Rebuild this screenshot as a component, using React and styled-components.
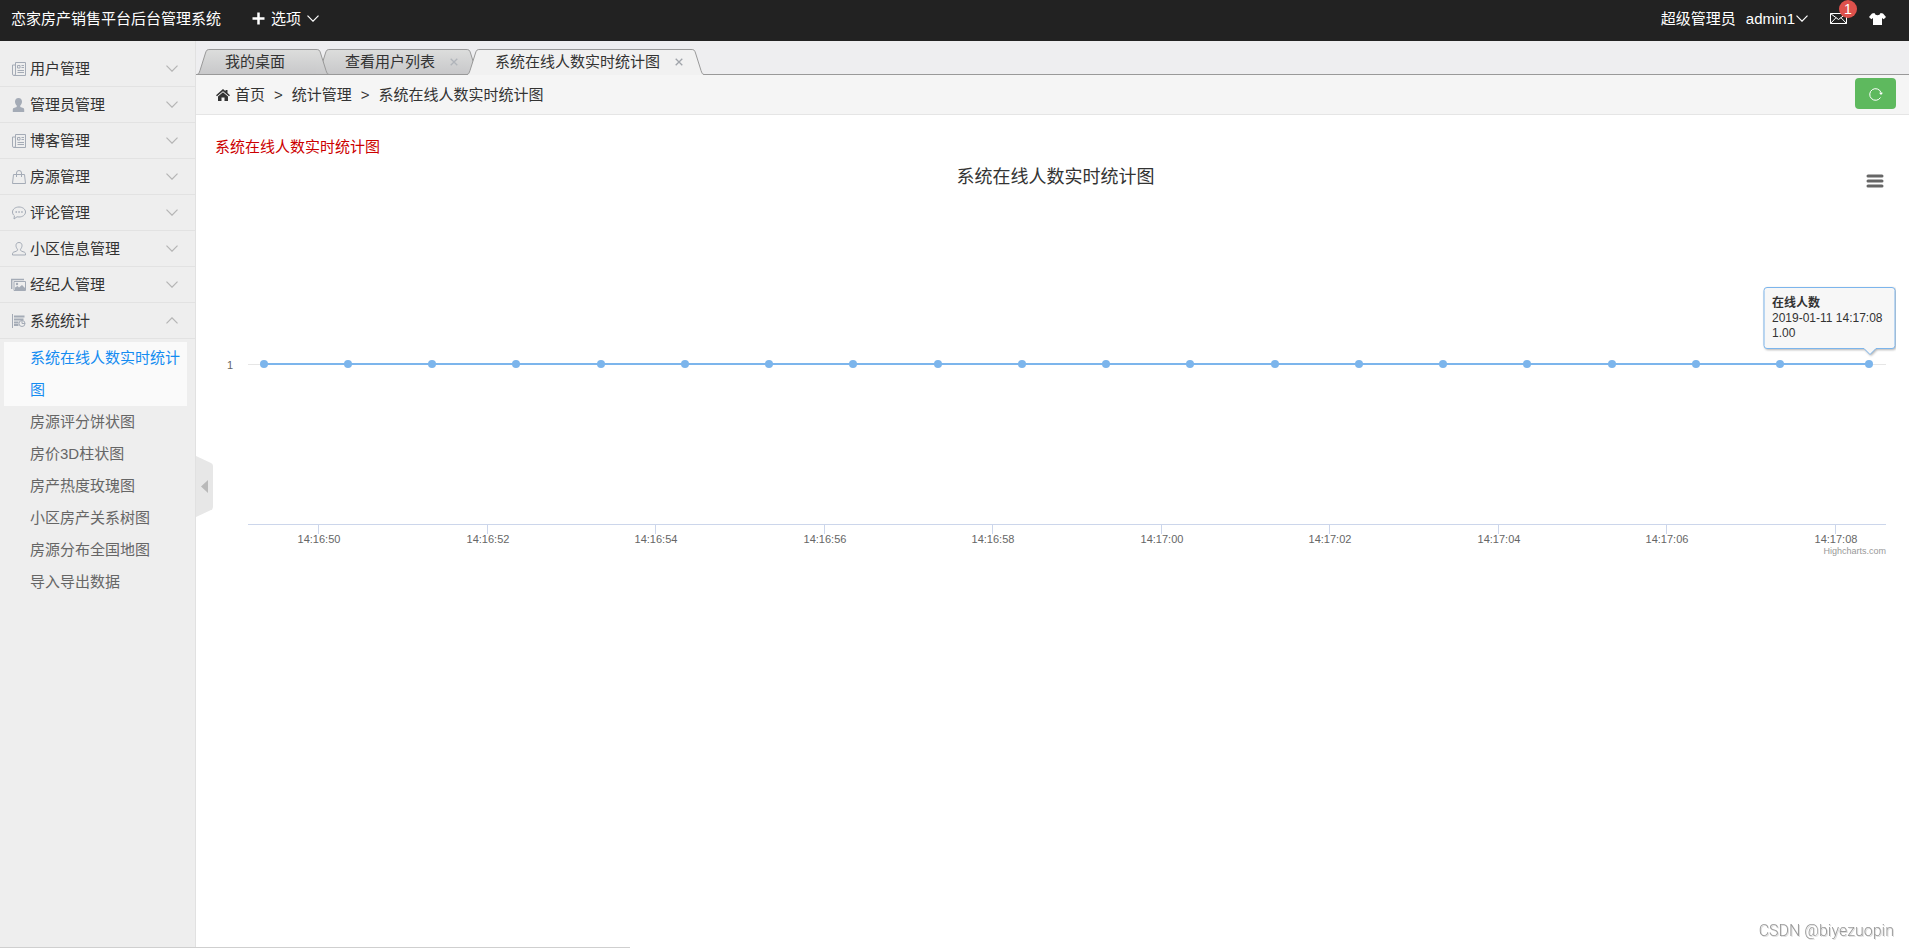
import React, { useCallback, useEffect, useRef, useState } from 'react';
import styled, { createGlobalStyle } from 'styled-components';

const MENUS = [
    { icon: 'news', title: '用户管理', items: [] },
    { icon: 'user', title: '管理员管理', items: [] },
    { icon: 'news', title: '博客管理', items: [] },
    { icon: 'bag', title: '房源管理', items: [] },
    { icon: 'comment', title: '评论管理', items: [] },
    { icon: 'userLine', title: '小区信息管理', items: [] },
    { icon: 'photo', title: '经纪人管理', items: [] },
    {
        icon: 'stats',
        title: '系统统计',
        items: [
            '系统在线人数实时统计图',
            '房源评分饼状图',
            '房价3D柱状图',
            '房产热度玫瑰图',
            '小区房产关系树图',
            '房源分布全国地图',
            '导入导出数据',
        ],
    },
];

const TABS = [
    { title: '我的桌面', closable: false },
    { title: '查看用户列表', closable: true },
    { title: '系统在线人数实时统计图', closable: true },
];

// seconds counted from 14:16:50
const TICKS = [
    { at: 0, label: '14:16:50' },
    { at: 2, label: '14:16:52' },
    { at: 4, label: '14:16:54' },
    { at: 6, label: '14:16:56' },
    { at: 8, label: '14:16:58' },
    { at: 10, label: '14:17:00' },
    { at: 12, label: '14:17:02' },
    { at: 14, label: '14:17:04' },
    { at: 16, label: '14:17:06' },
    { at: 18, label: '14:17:08' },
];
const POINTS = [...Array.from({ length: 19 }, (_, i) => i - 0.65), 18.4];
const RANGE = [-0.84, 18.6];

const MenuIcon = ({ name }) => (
    <svg width="15" height="14" viewBox="0 0 15 14" fill="none" stroke="#a4abb6" aria-hidden="true">
        {name === 'news' && (
            <>
                <path d="M4.500.5h10v13H3a1.500 1.500 0 0 1-1.500-1.500V3h3M4.500.5V12a1.500 1.500 0 0 1-1.500 1.500" />
                <path d="M6.500 3.500h2.500v2.500H6.500zM10.500 3.500h2.500M10.500 5.500h2.500M6.500 8.500h6.500M6.500 10.500h6.500" />
            </>
        )}
        {name === 'user' && (
            <path d="M7.500 0C5.300 0 4 1.500 4 3.600c0 1.600.7 3 1.700 3.900v1.400L2.800 10c-.8.300-1 1-1 2v2h11.400v-2c0-1-.2-1.700-1-2L9.300 8.900V7.500c1-.9 1.700-2.300 1.700-3.900C11 1.500 9.700 0 7.500 0z" fill="#a4abb6" stroke="none" />
        )}
        {name === 'bag' && (
            <path d="M2.500 4.500h11l1 9h-13zM5.500 7V3a2.500 2.500 0 0 1 5 0v4" />
        )}
        {name === 'comment' && (
            <>
                <path d="M8 1c3.700 0 6.500 2.200 6.500 5S11.700 11 8 11c-.7 0-1.400-.1-2-.2L3 13l.4-3.200C2.200 8.900 1.500 7.500 1.500 6c0-2.800 2.800-5 6.500-5z" />
                <path d="M4.500 6H6M7.300 6h1.500M10.200 6h1.500" strokeWidth="1.500" />
            </>
        )}
        {name === 'userLine' && (
            <path d="M8 .5C6.100.5 5 1.700 5 3.500c0 1.600.8 3 1.500 3.700 0 1-.3 1.800-1.300 2.100L2.500 10.200c-.8.300-1 1-1 2.800h13c0-1.800-.2-2.500-1-2.800l-2.700-.9c-1-.3-1.300-1.100-1.300-2.100C10.200 6.500 11 5.100 11 3.500c0-1.800-1.100-3-3-3z" />
        )}
        {name === 'photo' && (
            <>
                <path d="M.7 11V1.500h12.300" strokeWidth="1.400" />
                <path d="M3 3.500h11.500v9H3z" />
                <path d="M4 12V9.500l2.500-1.500 1.500 1.500 3-2.500 3 3v2z" fill="#a4abb6" stroke="none" />
                <circle cx="6" cy="6" r="1.200" fill="#a4abb6" stroke="none" />
            </>
        )}
        {name === 'stats' && (
            <>
                <path d="M1.500 0v14" />
                <path d="M3 2.500h10.500M3 5.500h9.500M3 8.500h4.500M3 11h4.500" strokeWidth="1.800" />
                <circle cx="11" cy="9.500" r="3" />
                <path d="M11 6.500v3h3" />
            </>
        )}
    </svg>
);

const Chevron = ({ up, color }) => (
    <svg width="12" height="7" viewBox="0 0 12 7" fill="none" stroke={color} strokeWidth="1.200" aria-hidden="true">
        <path d={up ? 'M.5 6.300L6 .8l5.500 5.500' : 'M.5.7L6 6.200 11.500.7'} />
    </svg>
);

const Header = () => (
    <HeaderStyled>
        <h1>恋家房产销售平台后台管理系统</h1>
        <TopButton>
            <svg width="13" height="13" viewBox="0 0 13 13" stroke="#fff" strokeWidth="2.500" aria-hidden="true">
                <path d="M6.500.5v12M.5 6.500h12" />
            </svg>
            选项
            <Chevron color="#fff" />
        </TopButton>
        <HeaderRight>
            <span>超级管理员</span>
            <TopButton $tight>admin1<Chevron color="#fff" /></TopButton>
            <IconLink href="#mail" aria-label="消息">
                <svg width="17" height="11" viewBox="0 0 17 11" fill="none" stroke="#fff">
                    <path d="M.5.5h16v10H.5zM.5.5l8 6 8-6M.5 10.500l5.500-5.800M16.500 10.500L11 4.700" />
                </svg>
                <Badge>1</Badge>
            </IconLink>
            <IconLink href="#skin" aria-label="换肤">
                <svg width="17" height="12" viewBox="0 0 17 12" fill="#fff">
                    <path d="M5.500 0C6 1.500 7 2.200 8.500 2.200S11 1.500 11.500 0L14 .5 17 4l-2.300 2.200L13 5v7H4V5L2.300 6.200 0 4 3 .5z" />
                </svg>
            </IconLink>
        </HeaderRight>
    </HeaderStyled>
);

const Sidebar = () => {
    const [open, setOpen] = useState(7);
    const [current, setCurrent] = useState('系统在线人数实时统计图');

    const onToggle = useCallback((index) => {
        setOpen((prev) => (prev === index ? -1 : index));
    }, []);

    return (
        <SidebarStyled>
            {MENUS.map((menu, index) => (
                <div key={menu.title}>
                    <MenuTitle aria-expanded={open === index} onClick={() => onToggle(index)}>
                        <MenuIcon name={menu.icon} />
                        <span>{menu.title}</span>
                        <Chevron up={open === index} color="#b4b4b4" />
                    </MenuTitle>
                    {open === index && menu.items.length > 0 && (
                        <SubMenu>
                            {menu.items.map((item) => (
                                <li key={item}>
                                    <SubLink href="#page" $active={current === item} onClick={() => setCurrent(item)}>{item}</SubLink>
                                </li>
                            ))}
                        </SubMenu>
                    )}
                </div>
            ))}
        </SidebarStyled>
    );
};

const Slant = ({ active, right }) => {
    const fill = active ? '#f1f1f1' : 'url(#tabFill)';
    return (
        <svg width="13" height="26" viewBox="0 0 13 26" aria-hidden="true">
            <defs>
                <linearGradient id="tabFill" x1="0" y1="0" x2="0" y2="1">
                    <stop offset="0" stopColor="#dcdddc" />
                    <stop offset="1" stopColor="#c8c8ca" />
                </linearGradient>
            </defs>
            <g transform={right ? 'matrix(-1 0 0 1 13 0)' : undefined}>
                <path d="M0 26C2 25 2 24 3 21.500L8.500 4C9.500 1 10 .5 13 .5V26z" fill={fill} />
                <path d="M0 25.500C2 25 2 24 3 21.500L8.500 4C9.500 1 10 .5 13 .5" fill="none" stroke="#999" />
                {!active && <path d="M0 25.500h13" stroke="#999" />}
            </g>
        </svg>
    );
};

const TabBar = () => {
    const [active, setActive] = useState(2);

    return (
        <TabBarStyled>
            {TABS.map((tab, index) => (
                <Tab key={tab.title} $active={active === index} $layer={active === index ? 10 : 5 - index}>
                    <Slant active={active === index} />
                    <div>
                        <button onClick={() => setActive(index)}>{tab.title}</button>
                        <TabEnd>
                            {tab.closable && (
                                <button aria-label="关闭">
                                    <svg width="8" height="8" viewBox="0 0 8 8" stroke={active === index ? '#a0a4aa' : '#b0b4ba'} strokeWidth="1.300">
                                        <path d="M.7.7l6.600 6.600M7.300.7L.7 7.300" />
                                    </svg>
                                </button>
                            )}
                        </TabEnd>
                    </div>
                    <Slant active={active === index} right />
                </Tab>
            ))}
        </TabBarStyled>
    );
};

const OnlineChart = () => {
    const box = useRef(null);
    const [width, setWidth] = useState(1680);

    useEffect(() => {
        const measure = () => setWidth(box.current.clientWidth);
        measure();
        window.addEventListener('resize', measure);
        return () => window.removeEventListener('resize', measure);
    }, []);

    const left = 33;
    const right = width - 10;
    const toX = (t) => Math.floor(left + ((t - RANGE[0]) / (RANGE[1] - RANGE[0])) * (right - left));
    const lastX = toX(POINTS[POINTS.length - 1]);

    return (
        <ChartBox ref={box}>
            <svg width={width} height="400" role="img" aria-label="系统在线人数实时统计图">
                <ChartText x={width / 2} y="24" textAnchor="middle" $size={18} $color="#333">系统在线人数实时统计图</ChartText>
                <path d={`M${left} 205.500H${right}`} stroke="#e6e6e6" />
                <path d={`M${left} 365.500H${right}`} stroke="#ccd6eb" />
                <ChartText x="18" y="210" textAnchor="end">1</ChartText>
                {TICKS.map(({ at, label }) => (
                    <g key={label}>
                        <path d={`M${toX(at) + 0.5} 365v10`} stroke="#ccd6eb" />
                        <ChartText x={toX(at) + 1} y="384" textAnchor="middle">{label}</ChartText>
                    </g>
                ))}
                <path d={`M${toX(POINTS[0])} 205H${lastX}`} stroke="#7cb5ec" strokeWidth="2" />
                {POINTS.map((t) => <circle key={t} cx={toX(t)} cy="205" r="4" fill="#7cb5ec" />)}
                <Tooltip transform={`translate(${lastX - 105} 128)`}>
                    <path d="M3 .5h125a3 3 0 0 1 3 3v55a3 3 0 0 1-3 3h-16l-6 6-6-6H3a3 3 0 0 1-3-3v-55a3 3 0 0 1 3-3z" />
                    <ChartText x="8" y="20" $size={12} $color="#333" $bold>在线人数</ChartText>
                    <ChartText x="8" y="35" $size={12} $color="#333">2019-01-11 14:17:08</ChartText>
                    <ChartText x="8" y="50" $size={12} $color="#333">1.00</ChartText>
                </Tooltip>
                <ChartText x={right} y="395" textAnchor="end" $size={9} $color="#999">Highcharts.com</ChartText>
            </svg>
            <ChartMenu aria-label="图表菜单">
                <svg width="18" height="14" viewBox="0 0 18 14" stroke="#666" strokeWidth="3" strokeLinecap="round">
                    <path d="M2 2h14M2 7h14M2 12h14" />
                </svg>
            </ChartMenu>
        </ChartBox>
    );
};

const App = () => (
    <Page>
        <GlobalStyle />
        <Header />
        <Body>
            <Sidebar />
            <Content>
                <TabBar />
                <Breadcrumb aria-label="位置">
                    <svg width="14" height="12" viewBox="0 0 14 12" fill="#333" aria-hidden="true">
                        <path d="M7 0l2.500 2.200V1h2v3L14 6.200l-1 1.100-6-5-6 5L0 6.200z" />
                        <path d="M7 3.200l5 4.200V12H8.500V8.500h-3V12H2V7.400z" />
                    </svg>
                    <a href="#home">首页</a>
                    <span>&gt;</span>
                    <span>统计管理</span>
                    <span>&gt;</span>
                    <span>系统在线人数实时统计图</span>
                    <RefreshButton aria-label="刷新">
                        <svg width="14" height="14" viewBox="0 0 14 14" fill="none" stroke="#fff">
                            <path d="M11.500 10.500A5.800 5.800 0 1 1 12 5.500V7" />
                            <path d="M10 5.800h4l-2 2.200z" fill="#fff" stroke="none" />
                        </svg>
                    </RefreshButton>
                </Breadcrumb>
                <Main>
                    <Warning>系统在线人数实时统计图</Warning>
                    <OnlineChart />
                </Main>
                <Collapse aria-label="收起菜单">
                    <svg width="17" height="61" viewBox="0 0 17 61">
                        <path d="M0 0l15 7q2 1 2 3v41q0 2-2 3L0 61z" fill="#e7e7e7" />
                        <path d="M12 24v13l-7-6.500z" fill="#b9b9b9" />
                    </svg>
                </Collapse>
            </Content>
        </Body>
        <Watermark>CSDN @biyezuopin</Watermark>
        <StatusLine />
    </Page>
);

export default App;

const GlobalStyle = createGlobalStyle`
    * {
        box-sizing: border-box;
    }
    body {
        margin: 0;
        font-family: "Liberation Sans", "Noto Sans CJK SC", sans-serif;
        font-size: 15px;
        line-height: 24px;
        color: #333;
        background-color: #fff;
    }
    button {
        padding: 0;
        border: 0;
        background: none;
        font: inherit;
        color: inherit;
        cursor: pointer;
    }
    a {
        color: inherit;
        text-decoration: none;
    }
    svg {
        display: block;
        flex: none;
    }
`;

const Page = styled.div`
    display: flex;
    flex-direction: column;
    min-height: 100vh;
`;

const HeaderStyled = styled.header`
    display: flex;
    align-items: center;
    height: 41px;
    padding: 0 23px 4px 11px;
    background-color: #222;
    color: #fff;
    & h1 {
        margin: 0 31px 0 0;
        font-size: 15px;
        font-weight: 400;
    }
`;

const TopButton = styled.button`
    display: flex;
    align-items: center;
    gap: ${({ $tight }) => ($tight ? '1px' : '6px')};
`;

const HeaderRight = styled.div`
    display: flex;
    align-items: center;
    margin-left: auto;
    gap: 10px;
`;

const IconLink = styled.a`
    position: relative;
    margin-left: 12px;
`;

const Badge = styled.span`
    position: absolute;
    top: -13px;
    left: 9px;
    width: 18px;
    height: 18px;
    border-radius: 50%;
    background-color: #dd514c;
    font-size: 14px;
    line-height: 18px;
    text-align: center;
`;

const Body = styled.div`
    display: flex;
    flex: 1;
`;

const SidebarStyled = styled.nav`
    flex: none;
    width: 196px;
    padding-top: 10px;
    border-right: 1px solid #e1e1e1;
    background-color: #eee;
`;

const MenuTitle = styled.button`
    display: flex;
    align-items: center;
    gap: 4px;
    width: 100%;
    height: 36px;
    padding: 0 17px 0 11px;
    border-bottom: 1px solid #e2e2e2;
    text-align: left;
    & span {
        flex: 1;
    }
`;

const SubMenu = styled.ul`
    margin: 0;
    padding: 3px 8px 0 4px;
    list-style: none;
`;

const SubLink = styled.a`
    display: block;
    padding: 0 6px 0 26px;
    line-height: 32px;
    color: ${({ $active }) => ($active ? '#148cf1' : '#666')};
    background-color: ${({ $active }) => ($active ? '#fafafa' : 'transparent')};
`;

const Content = styled.div`
    position: relative;
    flex: 1;
    min-width: 0;
`;

const TabBarStyled = styled.div`
    display: flex;
    align-items: flex-end;
    height: 34px;
    padding-left: 1px;
    background: linear-gradient(#999, #999) left bottom / 100% 1px no-repeat #eeeef0;
`;

const Tab = styled.div`
    display: flex;
    position: relative;
    z-index: ${({ $layer }) => $layer};
    height: 26px;
    & + & {
        margin-left: -12px;
    }
    & > div {
        display: flex;
        padding-left: 15px;
        border-top: 1px solid #999;
        border-bottom: 1px solid ${({ $active }) => ($active ? '#f1f1f1' : '#999')};
        background: ${({ $active }) => ($active ? '#f1f1f1' : 'linear-gradient(#dcdddc, #c8c8ca)')};
    }
`;

const TabEnd = styled.div`
    display: flex;
    align-items: center;
    width: 31px;
    padding-left: 15px;
`;

const Breadcrumb = styled.nav`
    display: flex;
    align-items: center;
    height: 40px;
    padding: 0 13px 0 20px;
    border-bottom: 1px solid #e5e5e5;
    background-color: #f5f5f5;
    gap: 9px;
    & > svg {
        margin-right: -4px;
    }
`;

const RefreshButton = styled.button`
    display: flex;
    justify-content: center;
    align-items: center;
    align-self: flex-start;
    width: 41px;
    height: 31px;
    margin: 3px 0 0 auto;
    border-radius: 4px;
    background-color: #5eb95e;
`;

const Main = styled.main`
    padding: 20px 13px 20px 19px;
`;

const Warning = styled.p`
    margin: 0;
    color: #c00;
`;

const ChartBox = styled.div`
    position: relative;
    height: 400px;
    overflow: hidden;
`;

const ChartText = styled.text`
    font-size: ${({ $size }) => $size || 11}px;
    font-weight: ${({ $bold }) => ($bold ? 700 : 400)};
    fill: ${({ $color }) => $color || '#666'};
`;

const Tooltip = styled.g`
    & > path {
        fill: #f7f7f7;
        stroke: #7cb5ec;
        filter: drop-shadow(1px 1px 1px rgba(0, 0, 0, .3));
    }
`;

const ChartMenu = styled.button`
    position: absolute;
    top: 10px;
    right: 9px;
    padding: 5px 3px;
`;

const Collapse = styled.button`
    position: absolute;
    top: calc(50vh - 59px);
    left: 0;
`;

const Watermark = styled.div`
    position: fixed;
    right: 15px;
    bottom: 5px;
    font-family: Roboto, "Liberation Sans", sans-serif;
    font-size: 16px;
    font-weight: 300;
    color: #999;
    text-shadow: 1px 1px 0 #ddd;
`;

const StatusLine = styled.div`
    position: fixed;
    left: 0;
    bottom: 0;
    width: 33%;
    height: 1px;
    background-color: #cfcfcf;
`;
